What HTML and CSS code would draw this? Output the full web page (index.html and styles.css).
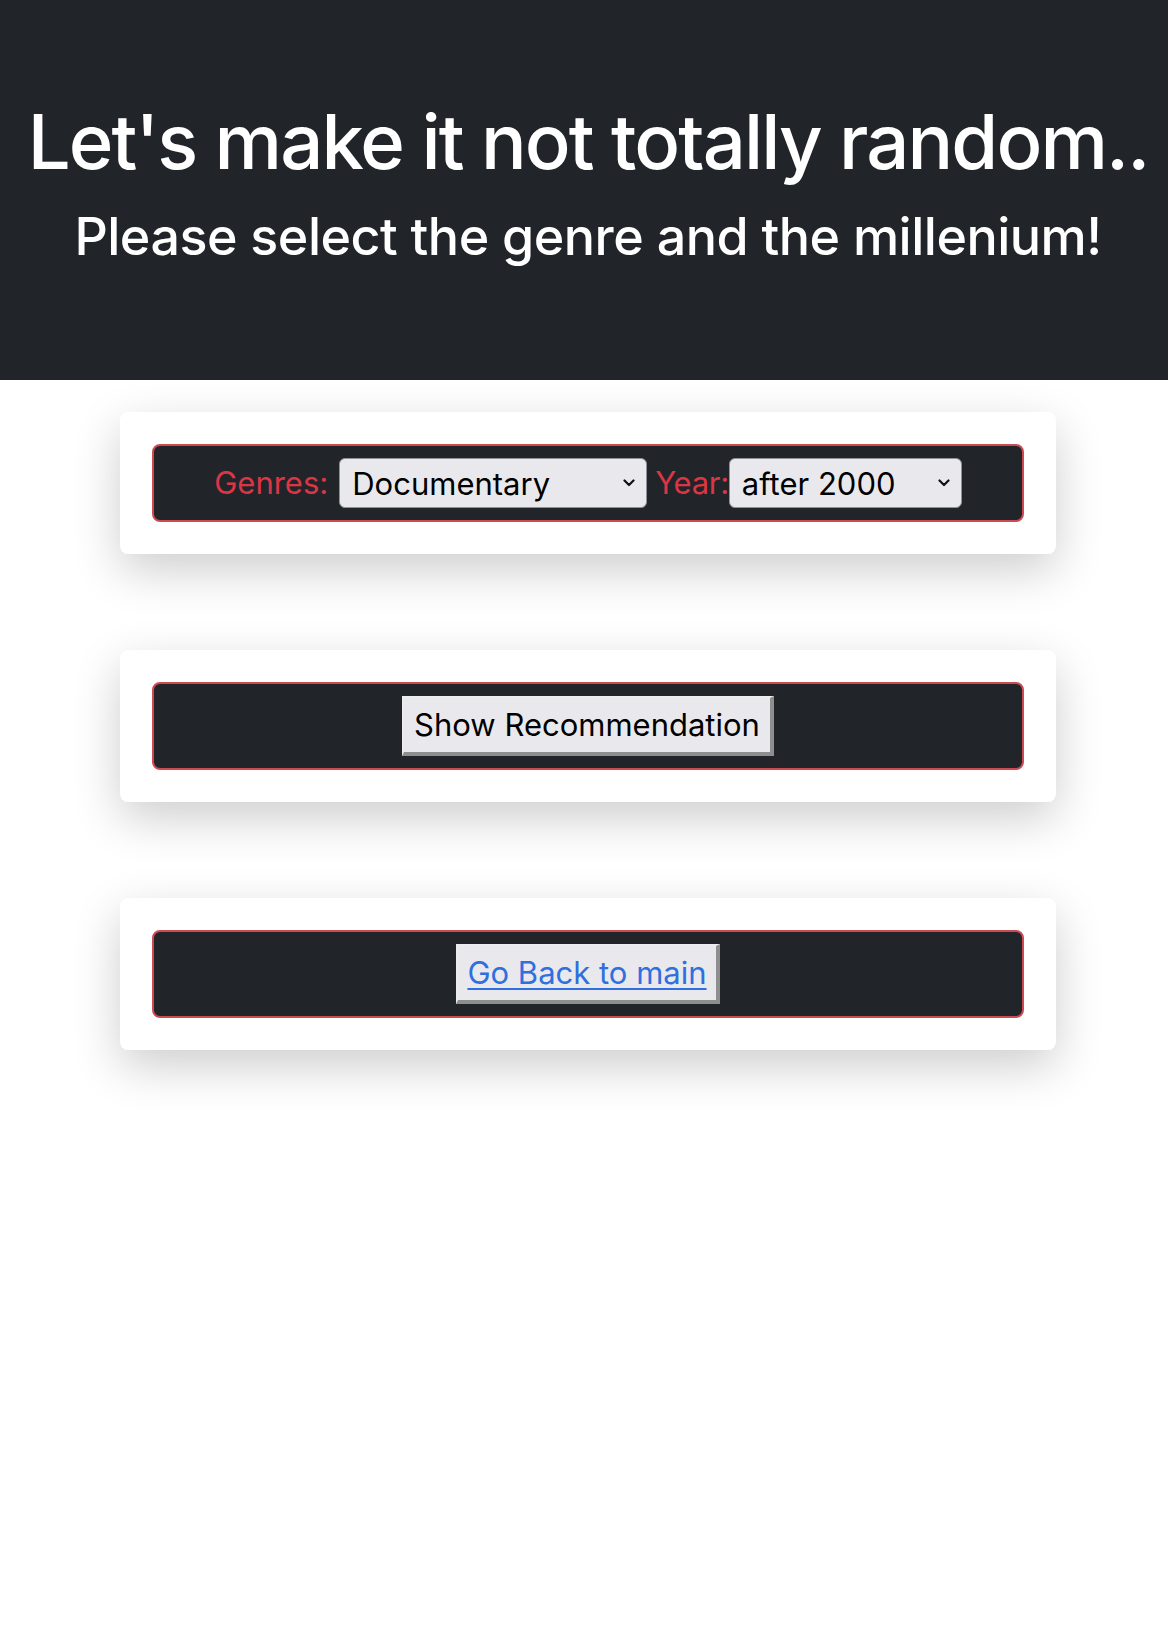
FILE: index.html
```html
<!DOCTYPE html>
<html lang="en">
<head>
<meta charset="utf-8">
<title>Not totally random</title>
<link rel="stylesheet" href="styles.css">
</head>
<body>
<header class="hero">
  <h1 class="hero-title">Let's make it not totally random..</h1>
  <h2 class="hero-sub">Please select the genre and the millenium!</h2>
</header>
<main class="main">
  <section class="card">
    <div class="panel">
      <label class="lbl lbl-genre" for="genre">Genres:</label>
      <span class="sel-wrap sel-genre">
        <select id="genre" class="sel">
          <option>Documentary</option>
          <option>Action</option>
          <option>Comedy</option>
          <option>Drama</option>
        </select>
        <svg class="chev" width="12" height="8" viewBox="0 0 12 8"><path d="M1.5 1.5 L6 6 L10.5 1.5" fill="none" stroke="#111" stroke-width="2.2" stroke-linecap="round" stroke-linejoin="round"/></svg>
      </span>
      <label class="lbl lbl-year" for="year">Year:</label>
      <span class="sel-wrap sel-year">
        <select id="year" class="sel">
          <option>after 2000</option>
          <option>before 2000</option>
        </select>
        <svg class="chev" width="12" height="8" viewBox="0 0 12 8"><path d="M1.5 1.5 L6 6 L10.5 1.5" fill="none" stroke="#111" stroke-width="2.2" stroke-linecap="round" stroke-linejoin="round"/></svg>
      </span>
    </div>
  </section>
  <section class="card">
    <div class="panel">
      <button class="btn" type="button">Show Recommendation</button>
    </div>
  </section>
  <section class="card">
    <div class="panel">
      <span class="btn btn-link"><a href="#" class="link">Go Back to main</a></span>
    </div>
  </section>
</main>
</body>
</html>
```
FILE: styles.css
```css
* { box-sizing: border-box; }
html, body { margin: 0; padding: 0; background: #ffffff; }
body {
  font-family: Inter, "Noto Sans", "Liberation Sans", sans-serif;
  color: #212529;
}
.hero {
  background: #212529;
  color: #ffffff;
  height: 380px;
  padding: 95px 0 0 8px;
  text-align: center;
}
.hero-title {
  margin: 0;
  font-size: 76px;
  font-weight: 500;
  line-height: 92px;
  letter-spacing: -1.9px;
  white-space: nowrap;
}
.hero-sub {
  margin: 19px 0 0;
  font-size: 52px;
  font-weight: 500;
  line-height: 62px;
  letter-spacing: -0.5px;
  white-space: nowrap;
}
.main {
  padding: 32px 0 160px 8px;
  display: flex;
  flex-direction: column;
  align-items: center;
  gap: 96px;
}
.card {
  width: 936px;
  background: #ffffff;
  border-radius: 8px;
  padding: 32px;
  box-shadow: 0 16px 48px rgba(0, 0, 0, 0.2);
}
.panel {
  background: #212529;
  border: 2px solid #cc4a52;
  border-radius: 8px;
  padding: 12px;
  display: flex;
  align-items: center;
  justify-content: center;
}
.lbl {
  color: #dc3545;
  font-size: 31px;
  line-height: 50px;
}
.lbl-genre { margin-right: 11px; }
.lbl-year { margin-left: 8px; margin-right: 0; letter-spacing: -0.3px; }
.sel-wrap {
  position: relative;
  display: inline-block;
  height: 50px;
}
.sel-genre { width: 308px; }
.sel-year { width: 233px; }
.sel {
  appearance: none;
  -webkit-appearance: none;
  width: 100%;
  height: 50px;
  margin: 0;
  padding: 0 30px 0 12px;
  background: #e9e9ed;
  border: 1px solid #8f8f9d;
  border-radius: 6px;
  font-family: Inter, "Noto Sans", "Liberation Sans", sans-serif;
  font-size: 31px;
  color: #000000;
}
.chev {
  position: absolute;
  right: 12px;
  top: 21px;
  pointer-events: none;
}
.btn {
  display: inline-block;
  margin: 0;
  height: 60px;
  padding: 0 10px;
  background: #e9e9ed;
  border-style: solid;
  border-width: 2px 4px 4px 2px;
  border-color: #ececf0 #8e8e8e #8e8e8e #ececf0;
  font-family: Inter, "Noto Sans", "Liberation Sans", sans-serif;
  font-size: 31px;
  line-height: 54px;
  color: #000000;
  cursor: pointer;
}
.btn-link { padding: 0 9px; }
.link {
  color: #2f6fdf;
  text-decoration: underline;
  text-decoration-thickness: 2px;
  text-underline-offset: 4px;
}
```
